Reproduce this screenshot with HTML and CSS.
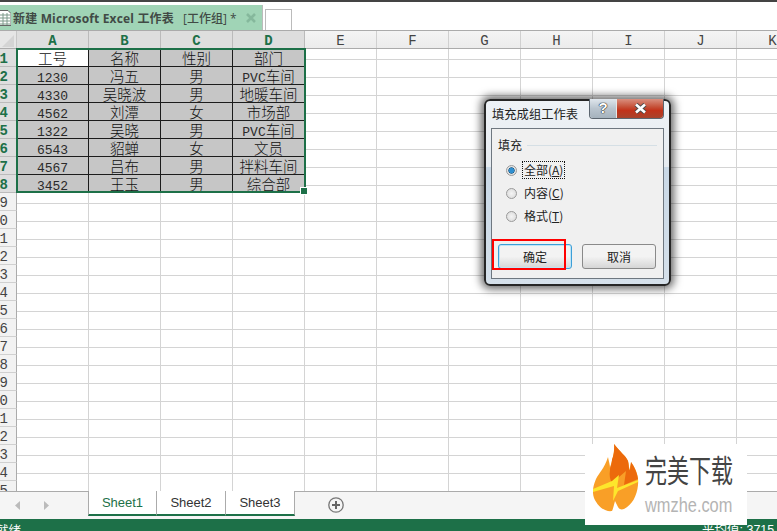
FILE: index.html
```html
<!DOCTYPE html>
<html lang="zh">
<head>
<meta charset="utf-8">
<title>新建 Microsoft Excel 工作表</title>
<link rel="stylesheet" href="styles.css">
</head>
<body>
<div class="app">
  <div class="tabline">
    <div class="doctab">
      <svg class="docicon" width="11" height="16" viewBox="0 0 11 16"><path d="M-1 .5h9l3 3v12h-12z" fill="#fff" stroke="#666"/><path d="M0 5h10M0 8h10M0 11h10M0 14h10M3 3v12M7 3v12" stroke="#7d9a8b" fill="none"/></svg>
      <span class="docname">新建 Microsoft Excel 工作表</span>
      <span class="docgroup">[工作组] *</span>
      <svg class="docclose" width="10" height="10" viewBox="0 0 10 10"><path d="M1 1l8 8M9 1l-8 8" stroke="#85b89c" stroke-width="2.600"/></svg>
    </div>
    <div class="newdoc"></div>
  </div>
  <div class="sheet">
    <div class="row headrow">
      <div class="corner"><svg width="12" height="12" viewBox="0 0 12 12"><path d="M12 0v12H0z" fill="#d4d4d4"/></svg></div>
      <div class="col sel">A</div><div class="col sel">B</div><div class="col sel">C</div><div class="col sel">D</div>
      <div class="col">E</div><div class="col">F</div><div class="col">G</div><div class="col">H</div><div class="col">I</div><div class="col">J</div><div class="col">K</div>
    </div>
    <div class="row"><div class="rh sel">1</div><div class="c first">工号</div><div class="c">名称</div><div class="c">性别</div><div class="c">部门</div></div>
    <div class="row"><div class="rh sel">2</div><div class="c"><span class="n">1230</span></div><div class="c">冯五</div><div class="c">男</div><div class="c"><span class="n">PVC</span>车间</div></div>
    <div class="row"><div class="rh sel">3</div><div class="c"><span class="n">4330</span></div><div class="c">吴晓波</div><div class="c">男</div><div class="c">地暖车间</div></div>
    <div class="row"><div class="rh sel">4</div><div class="c"><span class="n">4562</span></div><div class="c">刘潭</div><div class="c">女</div><div class="c">市场部</div></div>
    <div class="row"><div class="rh sel">5</div><div class="c"><span class="n">1322</span></div><div class="c">吴晓</div><div class="c">男</div><div class="c"><span class="n">PVC</span>车间</div></div>
    <div class="row"><div class="rh sel">6</div><div class="c"><span class="n">6543</span></div><div class="c">貂蝉</div><div class="c">女</div><div class="c">文员</div></div>
    <div class="row"><div class="rh sel">7</div><div class="c"><span class="n">4567</span></div><div class="c">吕布</div><div class="c">男</div><div class="c">拌料车间</div></div>
    <div class="row"><div class="rh sel">8</div><div class="c"><span class="n">3452</span></div><div class="c">王玉</div><div class="c">男</div><div class="c">综合部</div></div>
    <div class="row"><div class="rh">9</div></div>
    <div class="row"><div class="rh">10</div></div>
    <div class="row"><div class="rh">11</div></div>
    <div class="row"><div class="rh">12</div></div>
    <div class="row"><div class="rh">13</div></div>
    <div class="row"><div class="rh">14</div></div>
    <div class="row"><div class="rh">15</div></div>
    <div class="row"><div class="rh">16</div></div>
    <div class="row"><div class="rh">17</div></div>
    <div class="row"><div class="rh">18</div></div>
    <div class="row"><div class="rh">19</div></div>
    <div class="row"><div class="rh">20</div></div>
    <div class="row"><div class="rh">21</div></div>
    <div class="row"><div class="rh">22</div></div>
    <div class="row"><div class="rh">23</div></div>
    <div class="row"><div class="rh">24</div></div>
    <div class="row"><div class="rh">25</div></div>
    <div class="selection"><span class="handle"></span></div>
  </div>
  <div class="tabbar">
    <div class="nav">
      <svg width="5" height="9" viewBox="0 0 5 9"><path d="M5 0v9L0 4.500z" fill="#bbb"/></svg>
      <svg width="5" height="9" viewBox="0 0 5 9"><path d="M0 0v9l5-4.500z" fill="#bbb"/></svg>
    </div>
    <div class="stab active">Sheet1</div>
    <div class="stab">Sheet2</div>
    <div class="stab">Sheet3</div>
    <svg class="addsheet" width="16" height="16" viewBox="0 0 16 16"><circle cx="8" cy="8" r="7.200" fill="none" stroke="#777" stroke-width="1.300"/><path d="M8 4v8M4 8h8" stroke="#666" stroke-width="2"/></svg>
  </div>
  <div class="status"><span class="ready">就绪</span><span class="avg">平均值: 3715.5</span></div>
</div>

<div class="dialog">
  <div class="titlebar">
    <span class="dtitle">填充成组工作表</span>
    <div class="wbtns">
      <span class="help">?</span>
      <span class="close"><svg width="13" height="11" viewBox="0 0 13 11"><path d="M2 1.500l9 8M11 1.500l-9 8" stroke="#4a4a4a" stroke-width="4.500"/><path d="M2 1.500l9 8M11 1.500l-9 8" stroke="#fff" stroke-width="2.600"/></svg></span>
    </div>
  </div>
  <div class="dbody">
    <div class="legend"><span>填充</span><i></i></div>
    <div class="radios">
      <div class="radio on"><b></b><span class="focus">全部(<u>A</u>)</span></div>
      <div class="radio"><b></b><span>内容(<u>C</u>)</span></div>
      <div class="radio"><b></b><span>格式(<u>T</u>)</span></div>
    </div>
    <div class="btns"><div class="btn def">确定</div><div class="btn">取消</div></div>
  </div>
</div>
<div class="redmark"></div>

<div class="logo">
  <svg class="flame" width="46" height="68" viewBox="0 0 46 68">
    <path d="M21 0c6 8 12 12 14 17 1 3 1 6 1 9 1-3 2-6 2-8 5 7 8 14 7 23-1 11-6 20-14 24-3 1-5 0-6-2l-3-6c-1 4-2 8-3 10-7 1-14-4-18-13-2-6-1-12 2-19 3-6 8-10 12-22 1 5 2 8 2 11C19 16 22 9 21 0z" fill="#f99f27"/>
    <path d="M21 0c6 8 12 12 14 17 1 6 1 10 2 9l1-8c4 6 6 11 7 17l-14 6 2-14-14 12c-2-3-3-8-2-13 0-4 2-5 2-11C19 16 22 9 21 0z" fill="#ec6a0c"/>
    <path d="M0 45l19-8 7-6-2 13 21-8v2L25 47l-5 10 1-15L0 48z" fill="#fde62c"/>
  </svg>
  <div class="logotext"><div class="cn">完美下载</div><div class="en">wmzhe.com</div></div>
</div>
</body>
</html>
```
FILE: styles.css
```css
* { box-sizing: border-box; }
html, body { margin: 0; padding: 0; width: 777px; height: 531px; overflow: hidden; background: #fff; }
body { font-family: "Noto Sans CJK SC", "Liberation Sans", sans-serif; position: relative; }
.app { display: flex; flex-direction: column; width: 777px; height: 531px; overflow: hidden; border-top: 2px solid #444; }

.tabline { display: flex; height: 29px; padding-top: 3px; gap: 2px; border-bottom: 1px solid #ababab; flex: none; }
.doctab { width: 263px; background: #a0d4b6; display: flex; align-items: center; border-right: 1px solid #bbb; color: #444; white-space: nowrap; }
.docicon { margin-right: 2px; flex: none; }
.docname, .docgroup { font-family: "Open Sans", "Noto Sans CJK SC", sans-serif; font-weight: 700; color: #414a45; font-size: 12px; }
.docname { letter-spacing: .17px; }
.docgroup { margin-left: 9px; font-weight: 500; }
.docclose { margin-left: 9px; flex: none; }
.newdoc { width: 27px; height: 21px; align-self: flex-end; border: 1px solid #bbb; border-bottom: 0; background: #fff; }

.sheet {
  position: relative; flex: none; height: 460px; overflow: hidden;
  background-color: #fff;
  background-image: repeating-linear-gradient(90deg, transparent 0 71px, #d4d4d4 71px 72px), repeating-linear-gradient(0deg, transparent 0 17px, #d4d4d4 17px 18px);
  background-position: 17px 0, 0 0;
}
.row { display: flex; height: 18px; }
.headrow { border-bottom: 1px solid #ababab; }
.corner { width: 17px; flex: none; background: #e6e6e6; border-right: 1px solid #c6c6c6; display: flex; align-items: flex-end; justify-content: flex-end; padding: 0 2px 1px 0; }
.col { width: 72px; flex: none; background: linear-gradient(#f4f4f4, #ececec); border-right: 1px solid #d0d0d0; text-align: center; font: 14px/20px "Liberation Mono", monospace; color: #444; }
.col.sel { background: #dedede; color: #1d7048; font-weight: 700; border-right-color: #bbb; }
.rh { width: 17px; flex: none; background: #f2f2f2; border-right: 1px solid #ababab; border-bottom: 1px solid #d0d0d0; padding-right: 8px; direction: rtl; font: 14px/20px "Liberation Mono", monospace; color: #444; white-space: nowrap; overflow: hidden; }
.rh.sel { background: #dedede; color: #1d7048; font-weight: 700; border-bottom-color: #bbb; }
.c { width: 72px; flex: none; height: 18px; background: #c6c6c6; border-right: 1px solid #1c1c1c; border-bottom: 1px solid #1c1c1c; text-align: center; font: 300 14.500px/17px "Noto Sans CJK SC", sans-serif; color: #111; white-space: nowrap; }
.c.first { background: #fff; }
.n { font: 13px/17px "Liberation Mono", monospace; color: #2a2a2a; }
.selection { position: absolute; left: 16px; top: 17px; width: 290px; height: 145px; border: 2px solid #1d7048; pointer-events: none; }
.handle { position: absolute; right: -3px; bottom: -3px; width: 6px; height: 6px; background: #1d7048; outline: 1px solid #fff; }

.tabbar { flex: none; height: 28px; display: flex; align-items: flex-start; background: #f5f5f5; border-top: 1px solid #ababab; }
.nav { width: 88px; height: 26px; flex: none; display: flex; gap: 24px; align-items: center; padding-left: 15px; padding-top: 1px; }
.stab { height: 25px; width: 69px; margin-top: -1px; background: #fff; border-bottom: 2px solid #1d7048; border-right: 1px solid #ababab; font: 13px/24px "Liberation Sans", sans-serif; color: #333; text-align: center; }
.stab.active { color: #1d7048; border-left: 1px solid #ababab; }
.addsheet { margin-left: 33px; margin-top: 5px; flex: none; }
.status { flex: none; height: 12px; background: #1d7048; color: #fff; font-size: 12.500px; line-height: 22px; display: flex; overflow: hidden; white-space: nowrap; }
.ready { flex: none; width: 20px; margin-left: -4px; }
.avg { flex: none; margin-left: 686px; font-family: "Liberation Sans", "Noto Sans CJK SC", sans-serif; }

.dialog { position: absolute; left: 484px; top: 99px; width: 187px; height: 187px; border-radius: 6px; border: 2px solid #262626; background: linear-gradient(#eef2f6 0, #e6ebf0 36%, #c9d8e6 36%, #d5e0ea); box-shadow: 0 0 9px 3px rgba(0,0,0,.6); padding: 0 5px 5px; display: flex; flex-direction: column; }
.titlebar { display: flex; height: 27px; flex: none; position: relative; }
.dtitle { font-size: 12.300px; color: #222; line-height: 14px; margin: 6px 0 0 1px; white-space: nowrap; }
.wbtns { position: absolute; right: 0; top: -2px; height: 20px; display: flex; border: 1px solid #5c6670; border-top: 0; border-radius: 0 0 4px 4px; overflow: hidden; }
.help { width: 27px; background: linear-gradient(#dfe6ec, #b9c4ce 50%, #a5b2bd); color: #fff; font: 700 15px/18px "Liberation Sans", sans-serif; text-align: center; text-shadow: 0 0 1px #222, 0 0 1px #222, 0 0 1px #222; border-right: 1px solid #e6e6e6; }
.close { width: 46px; background: linear-gradient(#d98f7f, #c6533b 40%, #c2321a 60%, #a8432c); display: flex; align-items: center; justify-content: center; }
.dbody { flex: 1; background: #f0f0f0; border: 1px solid #6e7780; padding: 8px 6px 9px; display: flex; flex-direction: column; }
.legend { display: flex; align-items: center; gap: 5px; font-size: 12px; line-height: 16px; color: #222; height: 16px; }
.legend i { flex: 1; height: 1px; background: #d5dfe5; }
.radios { display: flex; flex-direction: column; gap: 5px; margin: 8px 0 0 8px; }
.radio { display: flex; align-items: center; gap: 5px; height: 18px; font-size: 12px; color: #222; white-space: nowrap; }
.radio span { padding: 0 1px; border: 1px solid transparent; line-height: 16px; }
.radio b { width: 11px; height: 11px; border-radius: 50%; border: 1px solid #9a9a9a; background: radial-gradient(#f4f4f4, #d8d8d8); flex: none; }
.radio.on b { background: radial-gradient(#2f8fd0 0 35%, #1c5a86 45%, #e4e4e4 55%); }
.radio .focus { border: 1px dotted #111; }
.btns { display: flex; gap: 10px; margin-top: auto; }
.btn { width: 74px; height: 25px; border: 1px solid #8a8a8a; border-radius: 3px; background: linear-gradient(#f3f3f3 50%, #d6d6d6); font-size: 12px; line-height: 23px; text-align: center; color: #222; }
.btn.def { border-color: #3c9fd8; box-shadow: inset 0 0 0 1px #bfe4f6; }
.redmark { position: absolute; left: 492px; top: 239px; width: 74px; height: 31px; border: 2px solid #f00; }

.logo { position: absolute; left: 585px; top: 444px; width: 162px; height: 81px; background: #fff; display: flex; overflow: hidden; }
.flame { margin-left: 8px; flex: none; }
.logotext { margin-left: 6px; display: flex; flex-direction: column; }
.cn { font-size: 22px; line-height: 24px; color: #444; margin-top: 7px; white-space: nowrap; transform: scaleY(1.4); transform-origin: top left; }
.en { font: 21px/24px "Liberation Sans", sans-serif; color: #b4b4b4; margin-top: 18px; white-space: nowrap; transform: scaleX(.78); transform-origin: top left; }
```
